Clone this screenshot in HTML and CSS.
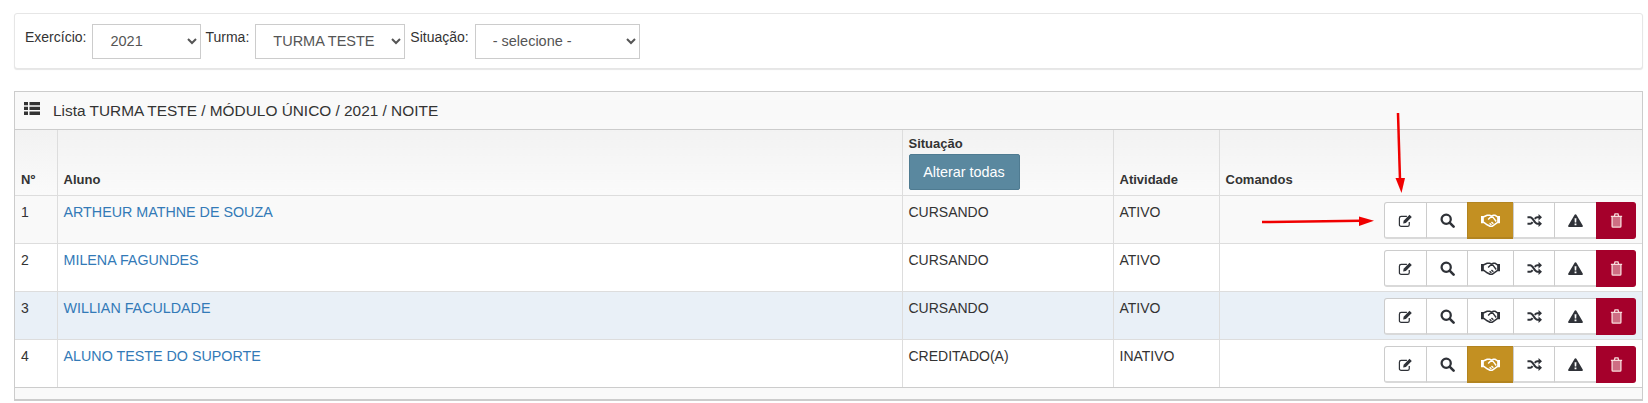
FILE: index.html
```html
<!DOCTYPE html>
<html lang="pt-BR">
<head>
    <meta charset="UTF-8">
    <meta name="viewport" content="width=device-width, initial-scale=1.0">
    <title>Lista de alunos</title>
    <link rel="stylesheet" href="styles.css">
</head>
<body>
    <svg width="0" height="0" class="icon-defs">
        <symbol id="i-edit" viewBox="0 0 16 16">
            <path d="M12 9.500V12.500A1.800 1.800 0 0 1 10.200 14.300H3.300A1.800 1.800 0 0 1 1.500 12.500V5.500A1.800 1.800 0 0 1 3.300 3.700H9.500" fill="none" stroke="currentColor" stroke-width="1.300"/>
            <path d="M6 8.200L12.300 1.900L14.700 4.300L8.400 10.600L5.500 11.100Z" fill="currentColor"/>
        </symbol>
        <symbol id="i-search" viewBox="0 0 16 16">
            <circle cx="6.600" cy="6.600" r="4.900" fill="none" stroke="currentColor" stroke-width="2.400"/>
            <path d="M10.500 10.500L14.500 14.500" stroke="currentColor" stroke-width="2.800" stroke-linecap="round"/>
        </symbol>
        <symbol id="i-hands" viewBox="0 0 20 14">
            <path d="M0 3H3L6.500 1.500H9.500L11 2.500L13 1.500H15L17 3H20V9H17.500L12 13H9.500L6.500 11.500L3 9H0Z" fill="none" stroke="currentColor" stroke-width="1.600" stroke-linejoin="round"/>
            <path d="M7.500 6L10 3.500H12.500L16 8M9 10L11 11.500M11 8.500L13 10.500" fill="none" stroke="currentColor" stroke-width="1.500"/>
            <path d="M0 3H3V9H0ZM17 3H20V9H17Z" fill="currentColor"/>
        </symbol>
        <symbol id="i-random" viewBox="0 0 16 14">
            <path d="M0.500 3.500H3.500C6.500 3.500 8 10.500 11 10.500H13M0.500 10.500H3.500C4.500 10.500 5.300 9.700 6 8.800M8.300 5.200C9 4.300 9.900 3.500 11 3.500H13" fill="none" stroke="currentColor" stroke-width="2.200"/>
            <path d="M12.300 0L16 3.500L12.300 7ZM12.300 7L16 10.500L12.300 14Z" fill="currentColor"/>
        </symbol>
        <symbol id="i-warning" viewBox="0 0 16 14">
            <path fill-rule="evenodd" d="M8 0.300C8.500 0.300 8.900 0.600 9.100 1L15.700 12.400C16.100 13.100 15.600 14 14.700 14H1.300C0.400 14 -0.100 13.100 0.300 12.400L6.900 1C7.100 0.600 7.500 0.300 8 0.300ZM7 4.500L7.200 9.200H8.800L9 4.500ZM7 10.200V12H9V10.200Z" fill="currentColor"/>
        </symbol>
        <symbol id="i-trash" viewBox="0 0 14 16">
            <path d="M1 3.500H13M4.700 3.300L5.400 1H8.600L9.300 3.300" fill="none" stroke="currentColor" stroke-width="1.400"/>
            <path d="M2.300 4V14C2.300 14.600 2.700 15 3.300 15H10.700C11.300 15 11.700 14.600 11.700 14V4" fill="currentColor" fill-opacity="0.500" stroke="currentColor" stroke-width="1.400"/>
        </symbol>
    </svg>

    <div class="page">
        <form class="filter-panel">
            <label class="filter-label">Exercício:</label>
            <select class="filter-select select-year"><option>2021</option></select>
            <label class="filter-label">Turma:</label>
            <select class="filter-select select-class"><option>TURMA TESTE</option></select>
            <label class="filter-label">Situação:</label>
            <select class="filter-select select-status"><option>- selecione -</option></select>
        </form>

        <div class="list-panel">
            <div class="list-heading">
                <svg class="list-icon" viewBox="0 0 16 13">
                    <path d="M0 0H4V3.300H0ZM5.500 0H16V3.300H5.500ZM0 4.800H4V8.100H0ZM5.500 4.800H16V8.100H5.500ZM0 9.600H4V12.900H0ZM5.500 9.600H16V12.900H5.500Z" fill="currentColor"/>
                </svg>
                <span>Lista TURMA TESTE / MÓDULO ÚNICO / 2021 / NOITE</span>
            </div>
            <table class="student-table">
                <colgroup>
                    <col class="col-num"><col class="col-name"><col class="col-status"><col class="col-activity"><col>
                </colgroup>
                <thead>
                    <tr>
                        <th>Nº</th>
                        <th>Aluno</th>
                        <th>
                            <div class="status-title">Situação</div>
                            <button type="button" class="btn-change">Alterar todas</button>
                        </th>
                        <th>Atividade</th>
                        <th>Comandos</th>
                    </tr>
                </thead>
                <tbody>
                    <tr class="row-grey">
                        <td>1</td>
                        <td><a href="#">ARTHEUR MATHNE DE SOUZA</a></td>
                        <td>CURSANDO</td>
                        <td>ATIVO</td>
                        <td class="cell-commands">
                            <div class="btn-group">
                                <button type="button" class="btn btn-edit"><svg><use href="#i-edit"/></svg></button>
                                <button type="button" class="btn btn-search"><svg><use href="#i-search"/></svg></button>
                                <button type="button" class="btn btn-deal is-gold"><svg><use href="#i-hands"/></svg></button>
                                <button type="button" class="btn btn-random"><svg><use href="#i-random"/></svg></button>
                                <button type="button" class="btn btn-warning"><svg><use href="#i-warning"/></svg></button>
                                <button type="button" class="btn btn-trash"><svg><use href="#i-trash"/></svg></button>
                            </div>
                        </td>
                    </tr>
                    <tr>
                        <td>2</td>
                        <td><a href="#">MILENA FAGUNDES</a></td>
                        <td>CURSANDO</td>
                        <td>ATIVO</td>
                        <td class="cell-commands">
                            <div class="btn-group">
                                <button type="button" class="btn btn-edit"><svg><use href="#i-edit"/></svg></button>
                                <button type="button" class="btn btn-search"><svg><use href="#i-search"/></svg></button>
                                <button type="button" class="btn btn-deal"><svg><use href="#i-hands"/></svg></button>
                                <button type="button" class="btn btn-random"><svg><use href="#i-random"/></svg></button>
                                <button type="button" class="btn btn-warning"><svg><use href="#i-warning"/></svg></button>
                                <button type="button" class="btn btn-trash"><svg><use href="#i-trash"/></svg></button>
                            </div>
                        </td>
                    </tr>
                    <tr class="row-blue">
                        <td>3</td>
                        <td><a href="#">WILLIAN FACULDADE</a></td>
                        <td>CURSANDO</td>
                        <td>ATIVO</td>
                        <td class="cell-commands">
                            <div class="btn-group">
                                <button type="button" class="btn btn-edit"><svg><use href="#i-edit"/></svg></button>
                                <button type="button" class="btn btn-search"><svg><use href="#i-search"/></svg></button>
                                <button type="button" class="btn btn-deal"><svg><use href="#i-hands"/></svg></button>
                                <button type="button" class="btn btn-random"><svg><use href="#i-random"/></svg></button>
                                <button type="button" class="btn btn-warning"><svg><use href="#i-warning"/></svg></button>
                                <button type="button" class="btn btn-trash"><svg><use href="#i-trash"/></svg></button>
                            </div>
                        </td>
                    </tr>
                    <tr>
                        <td>4</td>
                        <td><a href="#">ALUNO TESTE DO SUPORTE</a></td>
                        <td>CREDITADO(A)</td>
                        <td>INATIVO</td>
                        <td class="cell-commands">
                            <div class="btn-group">
                                <button type="button" class="btn btn-edit"><svg><use href="#i-edit"/></svg></button>
                                <button type="button" class="btn btn-search"><svg><use href="#i-search"/></svg></button>
                                <button type="button" class="btn btn-deal is-gold"><svg><use href="#i-hands"/></svg></button>
                                <button type="button" class="btn btn-random"><svg><use href="#i-random"/></svg></button>
                                <button type="button" class="btn btn-warning"><svg><use href="#i-warning"/></svg></button>
                                <button type="button" class="btn btn-trash"><svg><use href="#i-trash"/></svg></button>
                            </div>
                        </td>
                    </tr>
                </tbody>
            </table>
            <div class="list-footer"></div>
        </div>
    </div>

    <!-- red arrows drawn over the screenshot -->
    <svg class="arrow-layer" width="1648" height="403" viewBox="0 0 1648 403">
        <path d="M1398 113L1400 180" stroke="#f00000" stroke-width="2.500" fill="none"/>
        <path d="M1395.500 178H1405L1401.500 193Z" fill="#f00000"/>
        <path d="M1262 222L1361 220.800" stroke="#f00000" stroke-width="2.500" fill="none"/>
        <path d="M1359 216.500V226L1374 220.800Z" fill="#f00000"/>
    </svg>
</body>
</html>
```

FILE: styles.css
```css
/* Basic Reset */
html, body {
    margin: 0;
    padding: 0;
}
body {
    background: #ffffff;
    color: #333;
    font-family: "Liberation Sans", Arial, sans-serif;
    font-size: 14px;
    overflow: hidden;
}
a {
    color: #337ab7;
    text-decoration: none;
    font-size: 14.3px;
}
.icon-defs {
    position: absolute;
}

.page {
    padding: 13px 5px 0 14px;
}

/* Filter */
.filter-panel {
    display: flex;
    align-items: flex-start;
    height: 56px;
    box-sizing: border-box;
    padding: 10px 0 0 10px;
    background: #ffffff;
    border: 1px solid #e6e6e6;
    border-radius: 3px;
    box-shadow: 0 1px 1px rgba(0, 0, 0, 0.1);
    margin-bottom: 22px;
}

.filter-label {
    margin: 3px 6px 0 0;
    line-height: 20px;
}

.filter-select {
    height: 35px;
    padding: 0 0 2px 13px;
    margin-right: 5px;
    background: #ffffff;
    border: 1px solid #cccccc;
    color: #555;
    font-family: inherit;
    font-size: 14.5px;
}
.select-year { width: 109px; margin-right: 4px; }
.select-class { width: 150px; }
.select-status { width: 165px; }

/* List */
.list-panel {
    border: 1px solid #cccccc;
    border-bottom-width: 2px;
    background: #f9f9f9;
}

.list-heading {
    display: flex;
    align-items: center;
    height: 37px;
    padding-left: 9px;
    background: #f9f9f9;
    border-bottom: 1px solid #cccccc;
    font-size: 15.4px;
}
.list-icon {
    width: 16px;
    height: 13px;
    margin: -5px 13px 0 0;
}

.student-table {
    width: 100%;
    table-layout: fixed;
    border-collapse: collapse;
    background: #ffffff;
}
.col-num { width: 42px; }
.col-name { width: 845px; }
.col-status { width: 211px; }
.col-activity { width: 106px; }

.student-table th, .student-table td {
    border: 1px solid #dddddd;
    padding: 6px 6px;
    line-height: 20px;
    text-align: left;
    vertical-align: top;
}
.student-table tr > :first-child { border-left: 0; }
.student-table tr > :last-child { border-right: 0; }
.student-table thead tr > * { border-top: 0; }

.student-table th {
    height: 65px;
    box-sizing: border-box;
    padding: 6px 6px 5px;
    vertical-align: bottom;
    font-size: 13px;
    background: linear-gradient(to bottom, #f2f2f2, #fafafa);
}
.student-table td {
    height: 48px;
    box-sizing: border-box;
}
.row-grey td { background: #f9f9f9; }
.row-blue td { background: #e9f0f7; }

.status-title {
    line-height: 16px;
    margin-bottom: 2px;
}
.btn-change {
    width: 111px;
    height: 36px;
    padding: 0;
    background: #5a889f;
    border: 1px solid #4f7b91;
    border-radius: 2px;
    color: #ffffff;
    font-family: inherit;
    font-size: 14.4px;
    display: block;
}

/* Commands */
.student-table .cell-commands {
    padding: 6px 6px 0 0;
    vertical-align: top;
}
.btn-group {
    display: flex;
    justify-content: flex-end;
}
.btn {
    display: flex;
    align-items: center;
    justify-content: center;
    width: 42px;
    height: 37px;
    padding: 0;
    margin-left: -1px;
    background: #ffffff;
    border: 1px solid #cccccc;
    border-bottom: 2px solid #d9d9d9;
    color: #2f3238;
}
.btn svg {
    width: 15px;
    height: 15px;
}
.btn-group .btn:first-child {
    margin-left: 0;
    border-radius: 3px 0 0 3px;
    width: 43px;
}
.btn-deal { width: 47px; }
.btn-deal svg { width: 19px; }
.btn-warning { width: 43px; }
.btn.is-gold {
    background: #c39022;
    border-color: #b28420;
    color: #ffffff;
}
.btn-trash {
    background: #a5002b;
    border-color: #a5002b;
    border-radius: 0 3px 3px 0;
    color: #f7dcdc;
    width: 40px;
}

.list-footer {
    height: 11px;
    border-top: 1px solid #cccccc;
    margin-top: -1px;
    position: relative;
    background: #f9f9f9;
}

.arrow-layer {
    position: absolute;
    top: 0;
    left: 0;
    pointer-events: none;
}
```
